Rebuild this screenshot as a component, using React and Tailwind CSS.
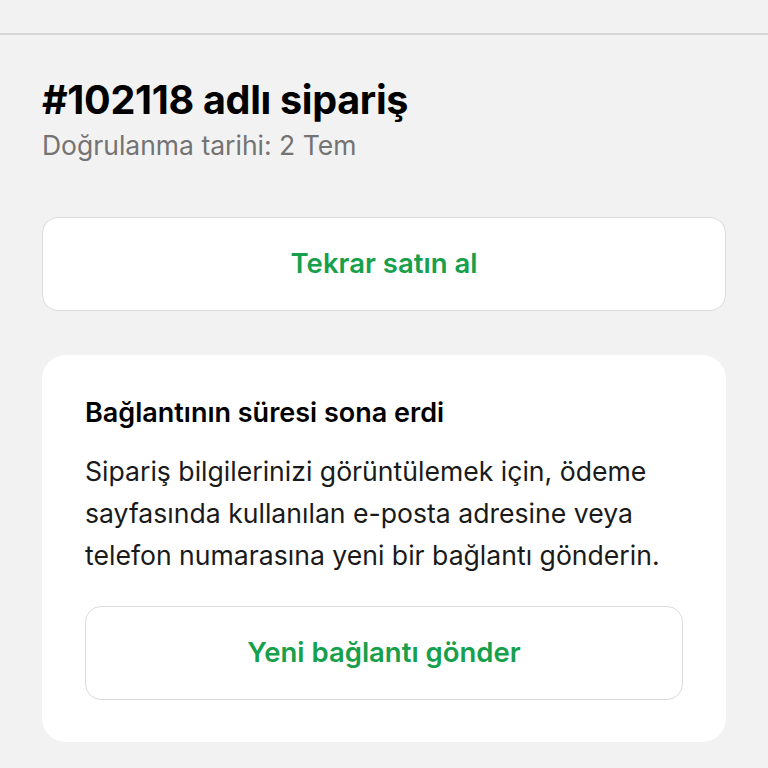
export default function App() {
  return (
    <div
      className="min-h-[768px] w-full bg-[#f2f2f2] text-black"
      style={{ fontFamily: "Inter, 'Noto Sans', sans-serif" }}
    >
      <div className="h-[33px]" />
      <div className="h-[2px] bg-[#d6d6d6]" />

      <div className="px-[42px]">
        <div className="pt-[42px]">
          <h1 className="text-[39.5px] font-bold leading-[46px] tracking-[-0.3px]">
            #102118 adlı sipariş
          </h1>
          <p className="mt-[6px] text-[26.5px] leading-[32px] text-[#737373]">
            Doğrulanma tarihi: 2 Tem
          </p>
        </div>

        <button className="mt-[56px] flex h-[94px] w-full items-center justify-center rounded-[16px] border border-[#dcdcdc] bg-white text-[27.5px] font-semibold text-[#17a04c]">
          Tekrar satın al
        </button>

        <div className="mt-[44px] rounded-[24px] bg-white px-[43px] pt-[40px] pb-[42px]">
          <h2 className="text-[27px] font-semibold leading-[36px]">
            Bağlantının süresi sona erdi
          </h2>
          <p className="mt-[19px] text-[26.6px] leading-[42px] text-[#1a1a1a]">
            Sipariş bilgilerinizi görüntülemek için, ödeme sayfasında kullanılan
            e-posta adresine veya telefon numarasına yeni bir bağlantı gönderin.
          </p>
          <button className="mt-[30px] flex h-[94px] w-full items-center justify-center rounded-[16px] border border-[#dcdcdc] bg-white text-[27.5px] font-semibold text-[#17a04c]">
            Yeni bağlantı gönder
          </button>
        </div>
      </div>
    </div>
  );
}
